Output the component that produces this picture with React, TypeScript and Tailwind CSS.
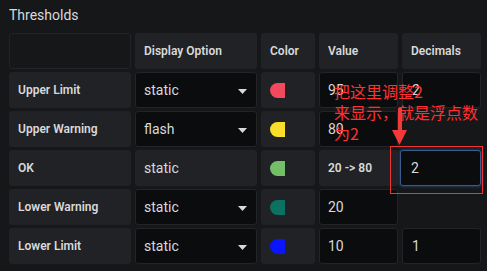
import React from 'react';

type Row = {
  label: string;
  option: string;
  color: string;
  value: string;
  decimals: string | null;
  ok?: boolean;
};

const rows: Row[] = [
  { label: 'Upper Limit', option: 'static', color: '#f2495c', value: '95', decimals: '2' },
  { label: 'Upper Warning', option: 'flash', color: '#fade2a', value: '80', decimals: null },
  { label: 'OK', option: 'static', color: '#73bf69', value: '20 -> 80', decimals: '2', ok: true },
  { label: 'Lower Warning', option: 'static', color: '#0a7260', value: '20', decimals: null },
  { label: 'Lower Limit', option: 'static', color: '#0a14ff', value: '10', decimals: '1' },
];

function Caret() {
  return (
    <svg width="9" height="5" viewBox="0 0 9 5" className="mr-[9px] mt-[2px]">
      <polygon points="0,0 9,0 4.5,5" fill="#d8d9da" />
    </svg>
  );
}

export default function App() {
  const labelCell = 'h-[36px] bg-[#212226] rounded-[3px] flex items-center pl-[9px] text-[12px] font-semibold text-[#d8d9da]';
  const inputCell = 'h-[36px] bg-[#0b0c0e] border border-[#232428] rounded-[3px] flex items-center text-[14px] text-[#d8d9da]';

  return (
    <div
      className="relative w-[487px] h-[271px] bg-[#161719] overflow-hidden"
      style={{ fontFamily: 'Roboto, "Noto Sans", "Noto Sans CJK SC", sans-serif' }}
    >
      <div className="pl-[9px] pt-[7px]">
        <div className="text-[14px] leading-[17px] text-[#d8d9da] mb-[9px]">Thresholds</div>

        <div className="grid grid-cols-[122px_122px_54px_79px_79px] gap-x-[4px] gap-y-[3px]">
          <div className="h-[36px] rounded-[3px] border border-[#222326] bg-[#161719]" />
          <div className={labelCell}>Display Option</div>
          <div className={labelCell}>Color</div>
          <div className={labelCell}>Value</div>
          <div className={labelCell}>Decimals</div>

          {rows.map((r) => (
            <React.Fragment key={r.label}>
              <div className={labelCell}>{r.label}</div>
              {r.ok ? (
                <div className="h-[36px] bg-[#212226] rounded-[3px] flex items-center pl-[9px] text-[14px] text-[#d8d9da]">
                  {r.option}
                </div>
              ) : (
                <div className={`${inputCell} pl-[8px] justify-between`}>
                  <span>{r.option}</span>
                  <Caret />
                </div>
              )}
              <div className="h-[36px] bg-[#212226] rounded-[3px] flex items-center pl-[9px]">
                <div className="w-[15px] h-[15px] rounded-l-full" style={{ background: r.color }} />
              </div>
              {r.ok ? (
                <div className={labelCell}>{r.value}</div>
              ) : (
                <div className={`${inputCell} pl-[8px]`}>{r.value}</div>
              )}
              {r.decimals === null ? (
                <div />
              ) : r.ok ? (
                <div className="h-[36px] -ml-[2px] bg-[#0b0c0e] border border-[#3b5b8a] shadow-[0_0_3px_1px_#223a5c] rounded-[3px] flex items-center pl-[10px] text-[14px] text-[#d8d9da]">
                  {r.decimals}
                </div>
              ) : (
                <div className={`${inputCell} pl-[9px]`}>{r.decimals}</div>
              )}
            </React.Fragment>
          ))}
        </div>
      </div>

      {/* annotation overlay */}
      <div
        className="absolute left-[334px] top-[81px] text-[16px] leading-[21px] text-[#ff3030] whitespace-nowrap"
        style={{ fontFamily: '"Noto Sans CJK SC", sans-serif' }}
      >
        把这里调整2
        <br />
        来显示，就是浮点数
        <br />
        为2
      </div>
      <svg className="absolute left-[391px] top-[108px]" width="17" height="38" viewBox="0 0 17 38">
        <rect x="7" y="0" width="4" height="23" fill="#f23a3a" />
        <polygon points="1,22 16,22 8.5,37" fill="#f23a3a" />
      </svg>
      <div className="absolute left-[390px] top-[146px] w-[93px] h-[48px] border-[1.5px] border-[#ee3535]" />
    </div>
  );
}
